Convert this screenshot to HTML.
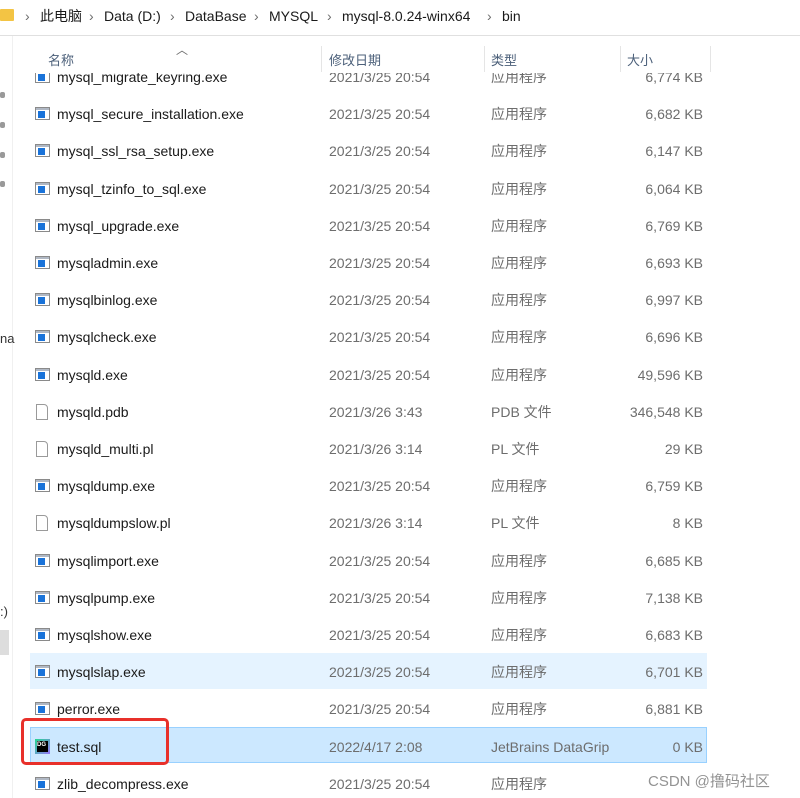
<!DOCTYPE html>
<html><head><meta charset="utf-8"><style>
body{margin:0;width:800px;height:798px;background:#fff;overflow:hidden;position:relative;font-family:"Liberation Sans","Noto Sans CJK SC",sans-serif;font-size:14px;color:#1a1a1a}
.a{position:absolute;white-space:nowrap;line-height:20px;height:20px}
.g{color:#6d6d6d}
.exe{position:absolute;width:15px;height:13px;border:1px solid #8a8a8a;background:#fff;box-sizing:border-box}
.exe:before{content:"";position:absolute;left:0;right:0;top:0;height:2px;background:#b0b8c4}
.exe:after{content:"";position:absolute;left:2px;top:3px;width:7px;height:7px;background:#1a73d9}
.doc{position:absolute;width:12px;height:16px;border:1px solid #9a9a9a;box-sizing:border-box;background:#fff;border-top-right-radius:4px}
.hl{position:absolute;left:30px;width:677px;height:36px}
</style></head><body>
<div class="a" style="left:0;top:9px;width:14px;height:12px;background:#f3c444;border-radius:1px"></div>
<div class="a g" style="left:25px;top:6px">›</div>
<div class="a" style="left:40px;top:6px">此电脑</div>
<div class="a g" style="left:89px;top:6px">›</div>
<div class="a" style="left:104px;top:6px">Data (D:)</div>
<div class="a g" style="left:170px;top:6px">›</div>
<div class="a" style="left:185px;top:6px">DataBase</div>
<div class="a g" style="left:254px;top:6px">›</div>
<div class="a" style="left:269px;top:6px">MYSQL</div>
<div class="a g" style="left:327px;top:6px">›</div>
<div class="a" style="left:342px;top:6px">mysql-8.0.24-winx64</div>
<div class="a g" style="left:487px;top:6px">›</div>
<div class="a" style="left:502px;top:6px">bin</div>
<div class="a" style="left:0;top:35px;width:800px;height:1px;background:#e0e0e0"></div>
<div class="a" style="left:12px;top:36px;width:1px;height:762px;background:#f0f0f0"></div>
<div class="a" style="left:0;top:329px;font-size:13px;color:#333">na</div>
<div class="a" style="left:0;top:602px;font-size:13px;color:#333">:)</div>
<div class="a" style="left:0;top:630px;width:9px;height:25px;background:#ddd"></div>
<div class="a" style="left:0;top:92px;width:5px;height:6px;background:#999;border-radius:2px"></div>
<div class="a" style="left:0;top:122px;width:5px;height:6px;background:#999;border-radius:2px"></div>
<div class="a" style="left:0;top:152px;width:5px;height:6px;background:#999;border-radius:2px"></div>
<div class="a" style="left:0;top:181px;width:5px;height:6px;background:#999;border-radius:2px"></div>
<div class="hl" style="top:653px;background:#e5f3ff"></div>
<div class="hl" style="top:727px;background:#cce8ff;border:1px solid #99d1ff;box-sizing:border-box"></div>
<div id="rows"></div>
<div class="a" style="left:20px;top:44px;width:700px;height:29px;background:#fff"></div>
<div class="a g" style="left:176px;top:40px;font-size:12px">︿</div>
<div class="a" style="left:48px;top:51px;font-size:13px;color:#4c607a">名称</div>
<div class="a" style="left:321px;top:46px;width:1px;height:26px;background:#e5e5e5"></div>
<div class="a" style="left:329px;top:51px;font-size:13px;color:#4c607a">修改日期</div>
<div class="a" style="left:484px;top:46px;width:1px;height:26px;background:#e5e5e5"></div>
<div class="a" style="left:491px;top:51px;font-size:13px;color:#4c607a">类型</div>
<div class="a" style="left:620px;top:46px;width:1px;height:26px;background:#e5e5e5"></div>
<div class="a" style="left:710px;top:46px;width:1px;height:26px;background:#e5e5e5"></div>
<div class="a" style="left:627px;top:51px;font-size:13px;color:#4c607a">大小</div>
<div class="a" style="left:21px;top:718px;width:148px;height:47px;border:3px solid #e8302a;border-radius:5px;box-sizing:border-box"></div>
<div class="a" style="left:648px;top:772px;font-size:15px;color:rgba(120,120,120,.8)">CSDN @撸码社区</div>
<script>
var R=[["mysql_migrate_keyring.exe","2021/3/25 20:54","应用程序","6,774 KB",0],
["mysql_secure_installation.exe","2021/3/25 20:54","应用程序","6,682 KB",0],
["mysql_ssl_rsa_setup.exe","2021/3/25 20:54","应用程序","6,147 KB",0],
["mysql_tzinfo_to_sql.exe","2021/3/25 20:54","应用程序","6,064 KB",0],
["mysql_upgrade.exe","2021/3/25 20:54","应用程序","6,769 KB",0],
["mysqladmin.exe","2021/3/25 20:54","应用程序","6,693 KB",0],
["mysqlbinlog.exe","2021/3/25 20:54","应用程序","6,997 KB",0],
["mysqlcheck.exe","2021/3/25 20:54","应用程序","6,696 KB",0],
["mysqld.exe","2021/3/25 20:54","应用程序","49,596 KB",0],
["mysqld.pdb","2021/3/26 3:43","PDB 文件","346,548 KB",1],
["mysqld_multi.pl","2021/3/26 3:14","PL 文件","29 KB",1],
["mysqldump.exe","2021/3/25 20:54","应用程序","6,759 KB",0],
["mysqldumpslow.pl","2021/3/26 3:14","PL 文件","8 KB",1],
["mysqlimport.exe","2021/3/25 20:54","应用程序","6,685 KB",0],
["mysqlpump.exe","2021/3/25 20:54","应用程序","7,138 KB",0],
["mysqlshow.exe","2021/3/25 20:54","应用程序","6,683 KB",0],
["mysqlslap.exe","2021/3/25 20:54","应用程序","6,701 KB",0],
["perror.exe","2021/3/25 20:54","应用程序","6,881 KB",0],
["test.sql","2022/4/17 2:08","JetBrains DataGrip","0 KB",2],
["zlib_decompress.exe","2021/3/25 20:54","应用程序","",0]];
var h="";
R.forEach(function(r,i){var c=77+i*37.2,t=c-10;
var ic=r[4]==1?'<div class="doc" style="left:36px;top:'+(c-8)+'px"></div>':r[4]==2?'<div class="a" style="left:35px;top:'+(c-8)+'px;width:15px;height:15px;background:linear-gradient(135deg,#22d88f,#9775f8);"><div style="position:absolute;left:2px;top:2px;width:11px;height:11px;background:#000;color:#fff;font-size:6px;line-height:8px;font-weight:bold">DG</div></div>':'<div class="exe" style="left:35px;top:'+(c-7)+'px"></div>';
h+=ic+'<div class="a" style="left:57px;top:'+t+'px">'+r[0]+'</div><div class="a g" style="left:329px;top:'+t+'px">'+r[1]+'</div><div class="a g" style="left:491px;top:'+t+'px">'+r[2]+'</div><div class="a g" style="right:97px;top:'+t+'px">'+r[3]+'</div>';});
document.getElementById("rows").innerHTML=h;
</script>
</body></html>
